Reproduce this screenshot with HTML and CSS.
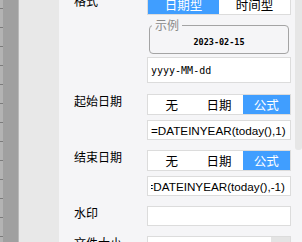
FILE: index.html
```html
<!DOCTYPE html>
<html lang="zh-CN">
<head>
    <meta charset="UTF-8">
    <meta name="viewport" content="width=device-width, initial-scale=1.0">
    <title>日期控件属性</title>
    <link rel="stylesheet" href="styles.css">
</head>
<body>
    <div class="screen">
        <div class="ruler"></div>
        <div class="gutter"></div>
        <div class="panel">
            <div class="form">
                <div class="row">
                    <div class="label">格式</div>
                    <div class="controls">
                        <div class="seg">
                            <div class="seg-btn active">日期型</div>
                            <div class="seg-btn">时间型</div>
                        </div>
                        <fieldset class="sample">
                            <legend>示例</legend>
                            <div class="sample-date">2023-02-15</div>
                        </fieldset>
                        <div class="field field-tall mono">yyyy-MM-dd</div>
                    </div>
                </div>
                <div class="row">
                    <div class="label">起始日期</div>
                    <div class="controls">
                        <div class="seg">
                            <div class="seg-btn">无</div>
                            <div class="seg-btn">日期</div>
                            <div class="seg-btn active">公式</div>
                        </div>
                        <div class="field">
                            <div class="field-text"><span>=DATEINYEAR(today(),1)</span></div>
                        </div>
                    </div>
                </div>
                <div class="row">
                    <div class="label">结束日期</div>
                    <div class="controls">
                        <div class="seg">
                            <div class="seg-btn">无</div>
                            <div class="seg-btn">日期</div>
                            <div class="seg-btn active">公式</div>
                        </div>
                        <div class="field field-scroll">
                            <div class="field-text scrolled"><span>=DATEINYEAR(today(),-1)</span></div>
                        </div>
                    </div>
                </div>
                <div class="row">
                    <div class="label">水印</div>
                    <div class="controls">
                        <div class="field field-first"></div>
                    </div>
                </div>
                <div class="row">
                    <div class="label">文件大小</div>
                    <div class="controls">
                        <div class="field field-first field-num">
                            <div class="field-text"><span>10</span></div>
                            <div class="spin"></div>
                        </div>
                    </div>
                </div>
            </div>
        </div>
        <div class="scrollbar">
            <div class="thumb"></div>
        </div>
    </div>
</body>
</html>
```

FILE: styles.css
```css
body {
    margin: 0;
    overflow: hidden;
    font-family: "Noto Sans CJK SC", sans-serif;
    font-size: 12px;
    color: #000;
}

.screen {
    display: flex;
    width: 100vw;
    height: 100vh;
    overflow: hidden;
}

/* ruler strip on the far left */
.ruler {
    flex: none;
    width: 18px;
    border-right: 1px solid #b9b9b9;
    background:
        repeating-linear-gradient(to bottom, transparent 0 8px, #7c7c7c 8px 9px, transparent 9px 19px) left top / 3px 100% no-repeat,
        linear-gradient(to right, #b3b3b3 0 3px, #a0a0a0 3px);
}

.gutter {
    flex: none;
    width: 40px;
    background: #e8e8e8;
}

.panel {
    flex: 1;
    padding: 0 4px 0 15px;
    background: #f5f5f7;
    overflow: hidden;
}

.form {
    display: flex;
    flex-direction: column;
    gap: 10px;
    margin-top: -6px;
}

.row {
    display: flex;
}

.label {
    flex: none;
    width: 73px;
    line-height: 14px;
    white-space: nowrap;
}

.controls {
    flex: none;
    width: 144px;
    display: flex;
    flex-direction: column;
}

.seg {
    display: flex;
    height: 21px;
    box-sizing: border-box;
    border: 1px solid #dcdcdc;
    background: #fff;
}

.seg-btn {
    flex: 1;
    text-align: center;
    line-height: 19px;
    font-size: 12.5px;
}

.seg-btn.active {
    background: #409eff;
    color: #fff;
}

.sample {
    margin: 4px 2px 0;
    padding: 0;
    border: 1px solid #a4a4a4;
    border-radius: 4px;
}

.sample legend {
    margin-left: 2px;
    padding: 0 3px;
    line-height: 12px;
    color: #8a8a8a;
}

.sample-date {
    height: 22px;
    line-height: 22px;
    text-align: center;
    font-family: "DejaVu Sans Mono", monospace;
    font-size: 8.5px;
    font-weight: bold;
}

.field {
    display: flex;
    align-items: center;
    height: 20px;
    box-sizing: border-box;
    margin-top: 5px;
    padding: 0 4px 0 3px;
    border: 1px solid #dcdcdc;
    background: #fff;
    font-family: "Liberation Sans", Arial, sans-serif;
    font-size: 11.7px;
    white-space: nowrap;
}

.field-tall {
    height: 26px;
    margin: 3px 0 1px;
}

.field-first {
    margin-top: 0;
}

.field-scroll {
    padding-right: 5px;
}

.mono {
    font-family: "DejaVu Sans Mono", monospace;
    font-size: 10px;
}

.field-text {
    flex: 1;
    display: flex;
    overflow: hidden;
}

.field-text span {
    flex: none;
}

.field-text.scrolled {
    justify-content: flex-end;
}

.field-num {
    padding-right: 0;
}

.spin {
    flex: none;
    align-self: stretch;
    width: 19px;
    background: #e4e4e4;
}

.scrollbar {
    flex: none;
    width: 7px;
    background: #f5f5f7;
}

.thumb {
    height: 150px;
    border-radius: 0 0 3px 3px;
    background: #e6e6e6;
}
```
